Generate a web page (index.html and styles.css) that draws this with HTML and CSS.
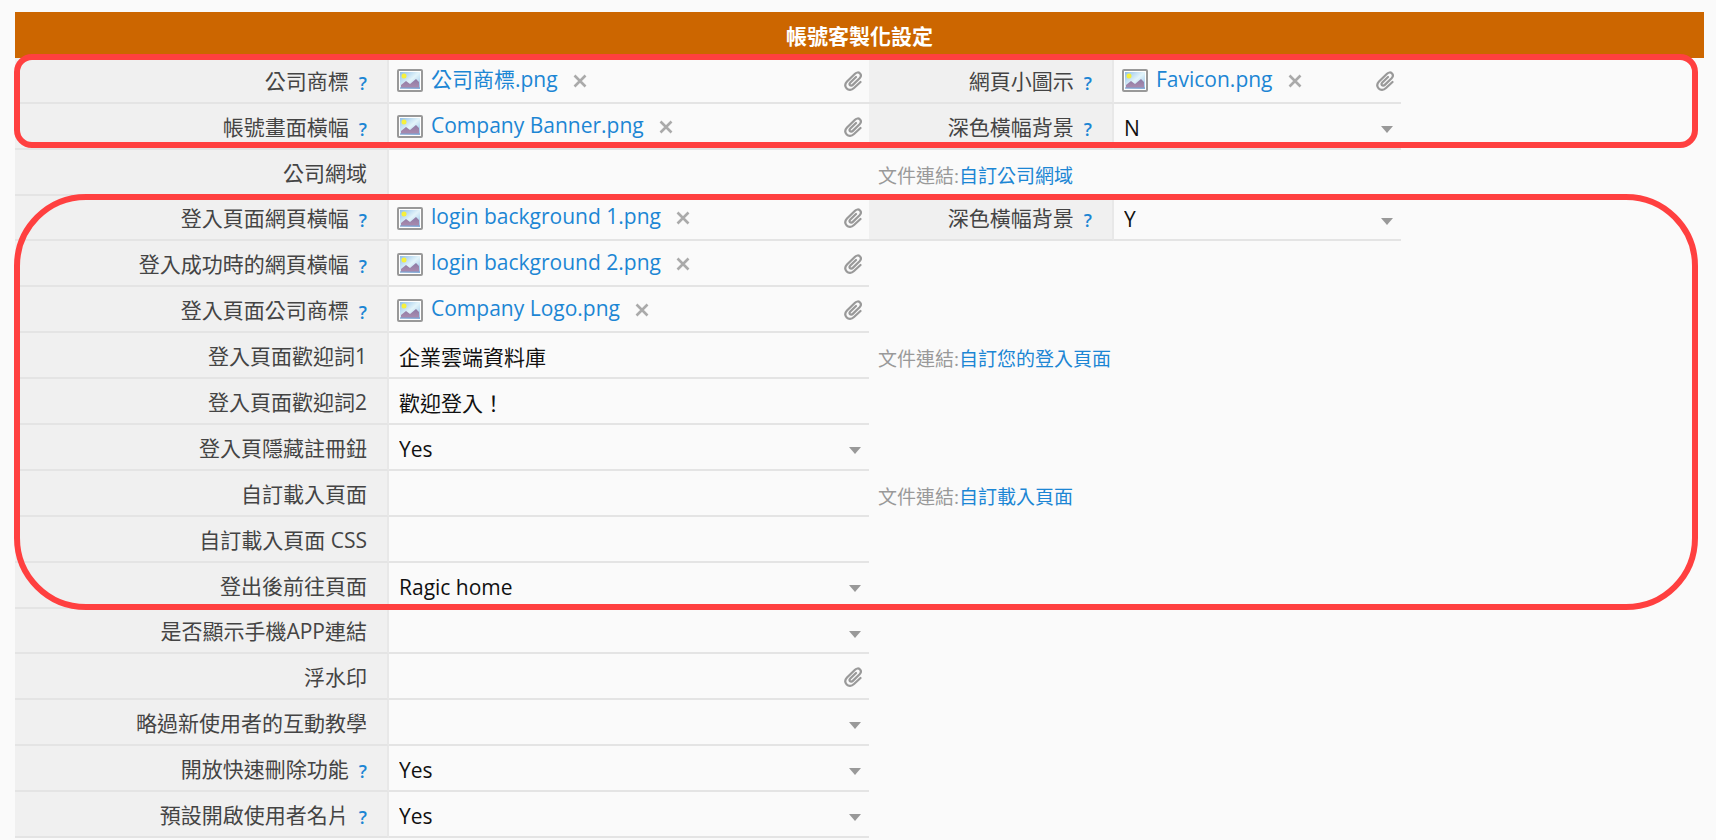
FILE: index.html
```
<!DOCTYPE html>
<html lang="zh-Hant">
<head>
  <meta charset="utf-8">
  <title>帳號客製化設定</title>
  <link rel="stylesheet" href="styles.css">
</head>
<body>
  <svg class="sprite" aria-hidden="true">
    <defs>
      <linearGradient id="sky" x1="0" y1="0" x2="1" y2="1">
        <stop offset="0" stop-color="#8fbfe8"/>
        <stop offset="0.5" stop-color="#e3f4fa"/>
        <stop offset="1" stop-color="#8fbfe8"/>
      </linearGradient>
      <linearGradient id="hill" x1="0" y1="0" x2="0" y2="1">
        <stop offset="0" stop-color="#8d7ba6"/>
        <stop offset="1" stop-color="#ab8cae"/>
      </linearGradient>
    </defs>
    <symbol id="picture" viewBox="0 0 26 23">
      <rect x="1" y="1" width="24" height="21" rx="1" fill="#fff" stroke="#999" stroke-width="2"/>
      <rect x="3" y="3" width="20" height="17" fill="url(#sky)"/>
      <path d="M4 18 L4 16 L9 12 L13 15 L19 10 L22 13 V19 H4 Z" fill="url(#hill)"/>
      <rect x="3" y="18" width="20" height="2" fill="#7fa0cf" opacity="0.6"/>
      <circle cx="7" cy="7" r="2.5" fill="#f6f03c"/>
    </symbol>
    <symbol id="cross" viewBox="0 0 14 14">
      <path d="M1.500 1.500 L12.500 12.500 M12.500 1.500 L1.500 12.500" fill="none" stroke="#aaa" stroke-width="2.600"/>
    </symbol>
    <symbol id="clip" viewBox="0 0 18 20">
      <path d="M16.500 11 L10 17 C7.500 19.400 4.500 19.400 2.700 17.500 C0.800 15.500 1 12.700 3 10.500 L11 2.700 C12.700 1.100 14.700 1.100 16 2.500 C17.300 3.900 17.100 5.700 15.600 7.300 L8.800 13.900 C7.800 14.900 6.700 14.900 6 14.200 C5.300 13.400 5.400 12.400 6.300 11.500 L12 6" fill="none" stroke="#999" stroke-width="2.200" stroke-linecap="round"/>
    </symbol>
  </svg>

  <form class="settings">
    <h1 class="title">帳號客製化設定</h1>

    <div class="row">
      <div class="name"><label for="logo">公司商標</label><button type="button" class="help">?</button></div>
      <div class="field">
        <svg class="picture"><use href="#picture"/></svg><a class="file" href="#">公司商標.png</a>
        <button type="button" class="remove" aria-label="移除"><svg><use href="#cross"/></svg></button>
        <button type="button" class="attach" id="logo"><svg><use href="#clip"/></svg></button>
      </div>
      <div class="name"><label for="favicon">網頁小圖示</label><button type="button" class="help">?</button></div>
      <div class="field">
        <svg class="picture"><use href="#picture"/></svg><a class="file" href="#">Favicon.png</a>
        <button type="button" class="remove" aria-label="移除"><svg><use href="#cross"/></svg></button>
        <button type="button" class="attach" id="favicon"><svg><use href="#clip"/></svg></button>
      </div>
    </div>

    <div class="row">
      <div class="name"><label for="banner">帳號畫面橫幅</label><button type="button" class="help">?</button></div>
      <div class="field">
        <svg class="picture"><use href="#picture"/></svg><a class="file" href="#">Company Banner.png</a>
        <button type="button" class="remove" aria-label="移除"><svg><use href="#cross"/></svg></button>
        <button type="button" class="attach" id="banner"><svg><use href="#clip"/></svg></button>
      </div>
      <div class="name"><label for="bannerDark">深色橫幅背景</label><button type="button" class="help">?</button></div>
      <div class="field"><select id="bannerDark"><option>N</option><option>Y</option></select></div>
    </div>

    <div class="row">
      <div class="name"><label for="domain">公司網域</label></div>
      <div class="field"><input type="text" id="domain"></div>
      <p class="doc">文件連結:<a href="#">自訂公司網域</a></p>
    </div>

    <div class="row">
      <div class="name"><label for="loginBanner">登入頁面網頁橫幅</label><button type="button" class="help">?</button></div>
      <div class="field">
        <svg class="picture"><use href="#picture"/></svg><a class="file" href="#">login background 1.png</a>
        <button type="button" class="remove" aria-label="移除"><svg><use href="#cross"/></svg></button>
        <button type="button" class="attach" id="loginBanner"><svg><use href="#clip"/></svg></button>
      </div>
      <div class="name"><label for="loginDark">深色橫幅背景</label><button type="button" class="help">?</button></div>
      <div class="field"><select id="loginDark"><option>Y</option><option>N</option></select></div>
    </div>

    <div class="row">
      <div class="name"><label for="successBanner">登入成功時的網頁橫幅</label><button type="button" class="help">?</button></div>
      <div class="field">
        <svg class="picture"><use href="#picture"/></svg><a class="file" href="#">login background 2.png</a>
        <button type="button" class="remove" aria-label="移除"><svg><use href="#cross"/></svg></button>
        <button type="button" class="attach" id="successBanner"><svg><use href="#clip"/></svg></button>
      </div>
    </div>

    <div class="row">
      <div class="name"><label for="loginLogo">登入頁面公司商標</label><button type="button" class="help">?</button></div>
      <div class="field">
        <svg class="picture"><use href="#picture"/></svg><a class="file" href="#">Company Logo.png</a>
        <button type="button" class="remove" aria-label="移除"><svg><use href="#cross"/></svg></button>
        <button type="button" class="attach" id="loginLogo"><svg><use href="#clip"/></svg></button>
      </div>
    </div>

    <div class="row">
      <div class="name"><label for="welcome1">登入頁面歡迎詞1</label></div>
      <div class="field"><input type="text" id="welcome1" value="企業雲端資料庫"></div>
      <p class="doc">文件連結:<a href="#">自訂您的登入頁面</a></p>
    </div>

    <div class="row">
      <div class="name"><label for="welcome2">登入頁面歡迎詞2</label></div>
      <div class="field"><input type="text" id="welcome2" value="歡迎登入！"></div>
    </div>

    <div class="row">
      <div class="name"><label for="hideSignup">登入頁隱藏註冊鈕</label></div>
      <div class="field"><select id="hideSignup"><option>Yes</option><option>No</option></select></div>
    </div>

    <div class="row">
      <div class="name"><label for="loading">自訂載入頁面</label></div>
      <div class="field"><input type="text" id="loading"></div>
      <p class="doc">文件連結:<a href="#">自訂載入頁面</a></p>
    </div>

    <div class="row">
      <div class="name"><label for="loadingCss">自訂載入頁面 CSS</label></div>
      <div class="field"><input type="text" id="loadingCss"></div>
    </div>

    <div class="row">
      <div class="name"><label for="logoutPage">登出後前往頁面</label></div>
      <div class="field"><select id="logoutPage"><option>Ragic home</option></select></div>
    </div>

    <div class="row">
      <div class="name"><label for="appLink">是否顯示手機APP連結</label></div>
      <div class="field"><select id="appLink"><option></option><option>Yes</option><option>No</option></select></div>
    </div>

    <div class="row">
      <div class="name"><label for="watermark">浮水印</label></div>
      <div class="field">
        <button type="button" class="attach" id="watermark"><svg><use href="#clip"/></svg></button>
      </div>
    </div>

    <div class="row">
      <div class="name"><label for="skipTour">略過新使用者的互動教學</label></div>
      <div class="field"><select id="skipTour"><option></option><option>Yes</option><option>No</option></select></div>
    </div>

    <div class="row">
      <div class="name"><label for="quickDelete">開放快速刪除功能</label><button type="button" class="help">?</button></div>
      <div class="field"><select id="quickDelete"><option>Yes</option><option>No</option></select></div>
    </div>

    <div class="row">
      <div class="name"><label for="userCard">預設開啟使用者名片</label><button type="button" class="help">?</button></div>
      <div class="field"><select id="userCard"><option>Yes</option><option>No</option></select></div>
    </div>

    <div class="mark mark-account"></div>
    <div class="mark mark-login"></div>
  </form>
</body>
</html>
```
FILE: styles.css
```
* {
  box-sizing: border-box;
}

body {
  margin: 0;
  background-color: #fafafa;
  color: #444;
  font-family: "Open Sans", "Noto Sans CJK TC", sans-serif;
  font-size: 21px;
  line-height: 30px;
}

.sprite {
  position: absolute;
  width: 0;
  height: 0;
}

a {
  color: #1c86d4;
  text-decoration: none;
}

button {
  padding: 0;
  border: none;
  background: none;
  cursor: pointer;
}

button svg {
  display: block;
  width: 100%;
  height: 100%;
}

.settings {
  position: relative;
  display: grid;
  grid-auto-rows: 1fr;
  min-height: 100vh;
  padding: 12px 12px 2px 15px;
}

.title {
  display: flex;
  align-items: center;
  justify-content: center;
  margin: 0;
  padding-top: 3px;
  background-color: #cc6600;
  color: #fff;
  font-size: 21px;
  font-weight: bold;
}

.row {
  display: grid;
  grid-template-columns: 374fr 480fr 245fr 287fr 303fr;
}

.name,
.field {
  display: flex;
  align-items: center;
  min-width: 0;
  padding-top: 2px;
  border-bottom: 2px solid #e4e4e4;
}

.name {
  justify-content: flex-end;
  gap: 10px;
  padding-right: 20px;
  border-right: 2px solid #e8e8e8;
  background-color: #f0f0f0;
}

.help {
  padding-top: 4px;
  color: #1c86d4;
  font-family: inherit;
  font-size: 18px;
  font-weight: 600;
  line-height: 24px;
}

.field {
  padding-left: 8px;
  padding-right: 7px;
}

.field input,
.field select {
  width: 100%;
  height: 100%;
  padding: 0 2px;
  border: none;
  background: none;
  color: #111;
  font: inherit;
  appearance: none;
  outline: none;
}

.field select {
  padding-top: 2px;
  background: url("data:image/svg+xml,%3Csvg xmlns='http://www.w3.org/2000/svg' viewBox='0 0 12 7'%3E%3Cpath d='M0 0H12L6 7Z' fill='%23999'/%3E%3C/svg%3E") no-repeat right 1px top 20px / 12px 7px;
}

.picture {
  flex: none;
  width: 26px;
  height: 23px;
  margin-right: 8px;
}

.file {
  padding-bottom: 4px;
  white-space: nowrap;
}

.remove {
  width: 14px;
  height: 14px;
  margin-left: 15px;
}

.attach {
  width: 18px;
  height: 20px;
  margin-left: auto;
}

.doc {
  grid-column: 3 / -1;
  align-self: center;
  margin: 0;
  padding: 6px 0 0 9px;
  color: #999;
  font-size: 19px;
}

/* red outlines drawn over the rows */
.mark {
  position: absolute;
  border: 6px solid #ff4040;
  pointer-events: none;
}

.mark-account {
  grid-row: 2 / 4;
  inset: -4px 18px 2px 14px;
  border-radius: 18px;
}

.mark-login {
  grid-row: 5 / 14;
  inset: -2px 18px -1px 14px;
  border-radius: 72px;
}
```
